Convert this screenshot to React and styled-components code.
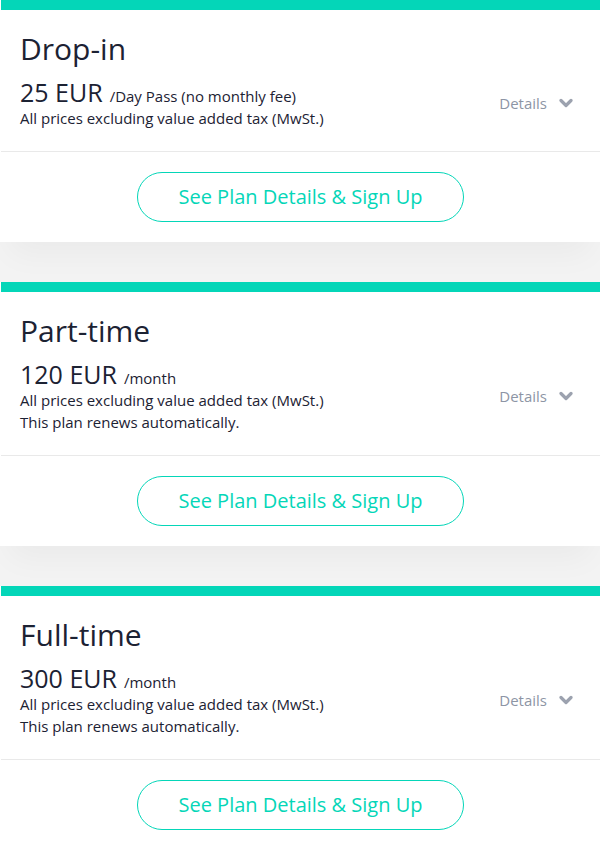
import React from "react";
import styled, { createGlobalStyle } from "styled-components";

const TEAL = "#04d6b8";

const Global = createGlobalStyle`
  html, body { margin: 0; padding: 0; }
  body {
    background: #f3f3f3;
    font-family: "Open Sans", "Noto Sans", sans-serif;
    color: #1c2233;
  }
`;

const Page = styled.div`
  display: flex;
  flex-direction: column;
  gap: 40px;
`;

const Card = styled.section`
  background: #fff;
  padding-left: 1px;
  box-shadow: 0 22px 30px -10px rgba(0, 0, 0, 0.04);
`;

const TopBar = styled.div`
  height: 10px;
  background: ${TEAL};
`;

const Header = styled.div`
  padding: 21px 27px 21px 19px;
  border-bottom: 1px solid #e9e9e9;
`;

const Title = styled.h2`
  margin: 0;
  font-size: 30px;
  line-height: 36px;
  font-weight: 400;
  color: #1c2233;
`;

const InfoRow = styled.div`
  display: flex;
  align-items: center;
  justify-content: space-between;
  margin-top: 10px;
`;

const PriceBlock = styled.div`
  display: flex;
  flex-direction: column;
`;

const PriceLine = styled.div`
  font-size: 25px;
  line-height: 30px;
`;

const Unit = styled.span`
  font-size: 15px;
  line-height: 1;
  margin-left: 7px;
`;

const Note = styled.div`
  font-size: 15px;
  line-height: 22.6px;
`;

const DetailsToggle = styled.button`
  display: flex;
  align-items: center;
  gap: 12px;
  background: none;
  border: none;
  padding: 0;
  font-family: inherit;
  font-size: 15px;
  color: #8d95a5;
  cursor: pointer;
`;

const Chevron = styled.svg`
  width: 14px;
  height: 10px;
  color: #9ca2af;
`;

const Actions = styled.div`
  display: flex;
  justify-content: center;
  padding: 20px 0;
`;

const SignUp = styled.button`
  height: 50px;
  padding: 0 40px;
  border: 1px solid ${TEAL};
  border-radius: 25px;
  background: #fff;
  color: ${TEAL};
  font-family: inherit;
  font-size: 20px;
  cursor: pointer;
`;

const plans = [
  {
    name: "Drop-in",
    amount: "25 EUR",
    unit: "/Day Pass (no monthly fee)",
    notes: ["All prices excluding value added tax (MwSt.)"],
  },
  {
    name: "Part-time",
    amount: "120 EUR",
    unit: "/month",
    notes: [
      "All prices excluding value added tax (MwSt.)",
      "This plan renews automatically.",
    ],
  },
  {
    name: "Full-time",
    amount: "300 EUR",
    unit: "/month",
    notes: [
      "All prices excluding value added tax (MwSt.)",
      "This plan renews automatically.",
    ],
  },
];

export default function App() {
  return (
    <>
      <Global />
      <Page>
        {plans.map((p) => (
          <Card key={p.name}>
            <TopBar />
            <Header>
              <Title>{p.name}</Title>
              <InfoRow>
                <PriceBlock>
                  <PriceLine>
                    {p.amount}
                    <Unit>{p.unit}</Unit>
                  </PriceLine>
                  {p.notes.map((n) => (
                    <Note key={n}>{n}</Note>
                  ))}
                </PriceBlock>
                <DetailsToggle>
                  Details
                  <Chevron viewBox="0 0 14 10" aria-hidden="true">
                    <polyline
                      points="2,2.5 7,7.5 12,2.5"
                      fill="none"
                      stroke="currentColor"
                      strokeWidth="3.2"
                      strokeLinecap="round"
                      strokeLinejoin="round"
                    />
                  </Chevron>
                </DetailsToggle>
              </InfoRow>
            </Header>
            <Actions>
              <SignUp>See Plan Details &amp; Sign Up</SignUp>
            </Actions>
          </Card>
        ))}
      </Page>
    </>
  );
}
